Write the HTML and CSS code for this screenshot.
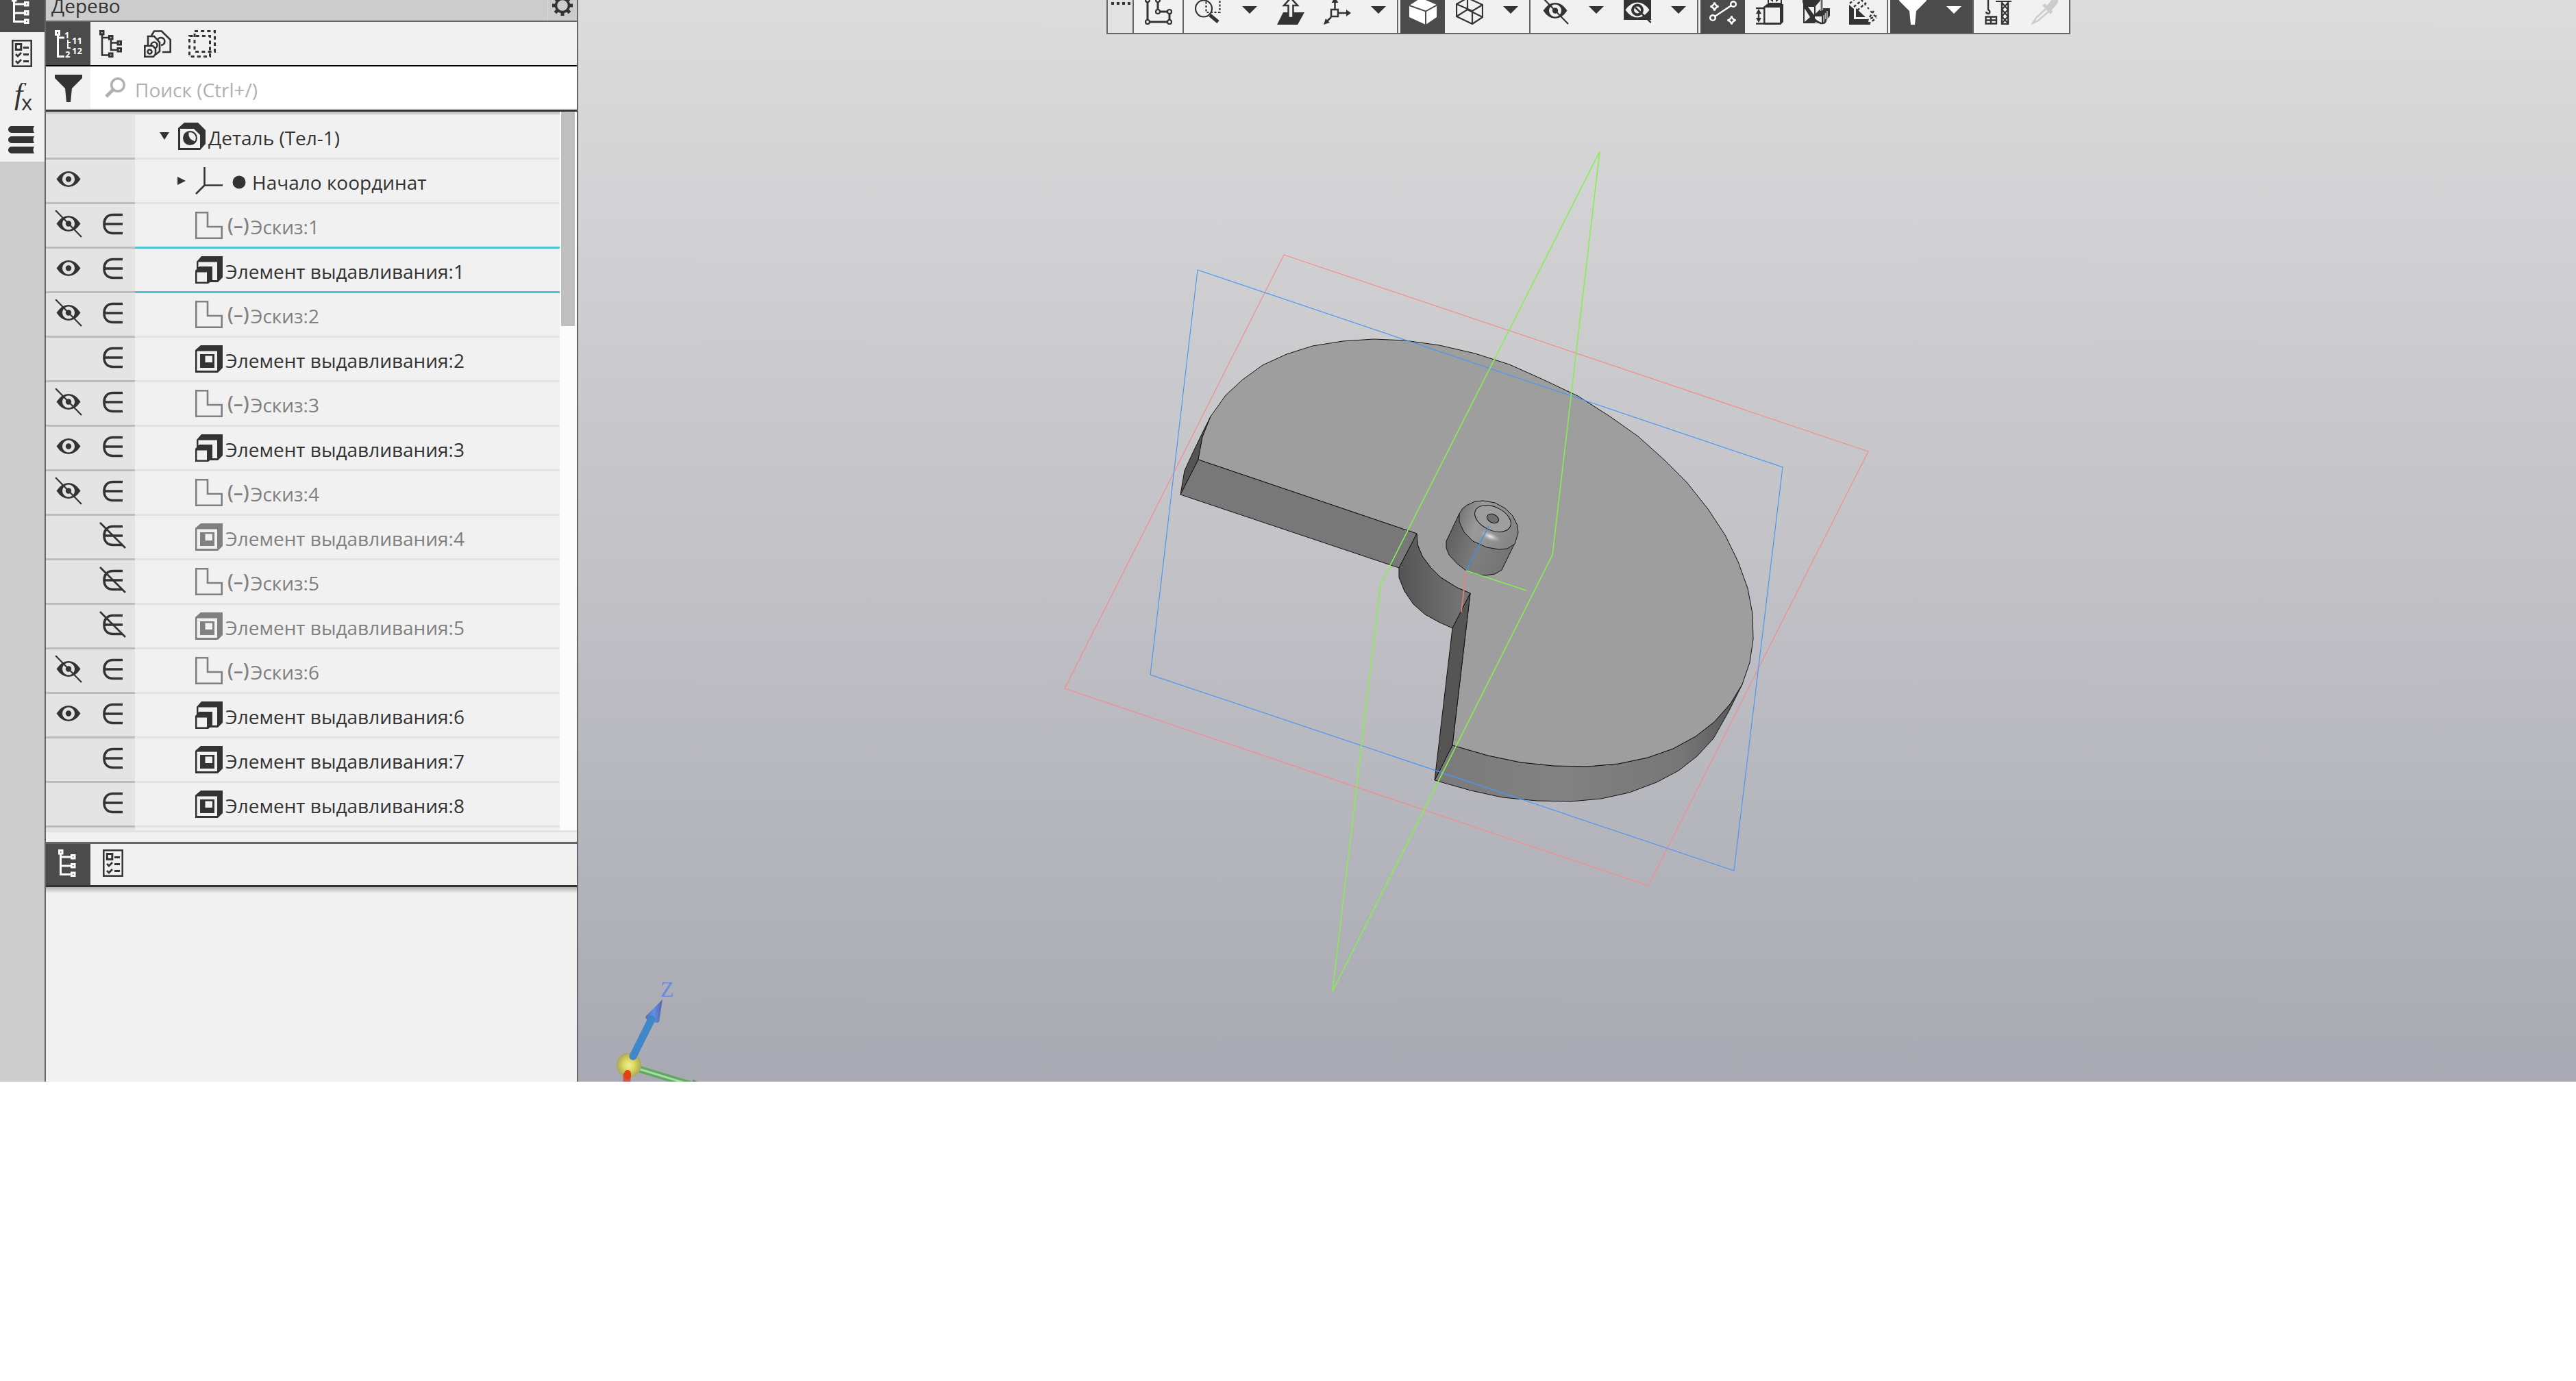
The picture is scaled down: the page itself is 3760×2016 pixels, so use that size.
FILE: index.html
```html
<!DOCTYPE html>
<html lang="ru">
<head>
<meta charset="utf-8">
<meta name="viewport" content="width=device-width, initial-scale=1">
<title>Деталь — Дерево</title>
<link rel="stylesheet" href="styles.css">
</head>
<body>
<svg class="sprite" aria-hidden="true">
  <symbol id="i-tree" viewBox="0 0 40 40"><g fill="none" stroke="currentColor" stroke-width="3"><rect x="6.500" y="1.500" width="4.500" height="4.500"/><rect x="24.500" y="8.500" width="4.500" height="4.500"/><rect x="24.500" y="21.500" width="4.500" height="4.500"/><rect x="24.500" y="34" width="4.500" height="4.500"/><path d="M8.500 7V36.500H23M8.500 11H23M8.500 24H23"/></g></symbol>
  <symbol id="i-list" viewBox="0 0 40 40"><g fill="none" stroke="currentColor" stroke-width="2.500"><rect x="6.300" y="1.300" width="27.400" height="37.400"/><rect x="11.300" y="6.500" width="7.500" height="8" stroke-width="3"/><path d="M22 11.500H30M22 21.500H30M22 31.500H30M11 21l3 3 5-5M11 31l3 3 5-5" stroke-width="2.800"/></g></symbol>
  <symbol id="i-books" viewBox="0 0 40 40"><path fill="currentColor" d="M5 0H38q-3 5 0 10H5a5 5 0 0 1 0-10zM5 15H38q-3 5 0 10H5a5 5 0 0 1 0-10zM5 30H38q-3 5 0 10H5a5 5 0 0 1 0-10z"/></symbol>
  <symbol id="i-numtree" viewBox="0 0 40 40"><g fill="none" stroke="currentColor" stroke-width="3"><rect x="1.500" y="1.500" width="5" height="5"/><path d="M4.500 8V38.500H14M4.500 11H14"/><path d="M19 14V27M19 18h4M19 26h4" stroke-width="2"/></g><g class="glyph"><text x="14" y="12">1</text><text x="25" y="20">11</text><text x="25" y="35">12</text><text x="15" y="40">2</text></g></symbol>
  <symbol id="i-branch" viewBox="0 0 40 40"><g fill="none" stroke="currentColor" stroke-width="3"><rect x="1.500" y="1.500" width="4.500" height="4.500"/><rect x="14.500" y="8.500" width="4.500" height="4.500"/><rect x="27" y="16.500" width="4.500" height="4.500"/><rect x="27" y="26.500" width="4.500" height="4.500"/><rect x="14.500" y="34" width="4.500" height="4.500"/><path d="M4 7V36.500H14M4 11H13M17 14V29H26M17 18.500H26" stroke-width="2.500"/></g></symbol>
  <symbol id="i-parts" viewBox="0 0 40 40"><g fill="#f1f1f1" stroke="currentColor" stroke-width="2.600"><path d="M11 8l4-6.500h11L38.700 14v18H27"/><path d="M20 14a5.500 5.500 0 1 1 5 8" fill="none"/><path d="M6 22V9h9l8 9v13l-5 4H8z"/><circle cx="15" cy="22" r="4.500"/><path d="M1.300 23H13l4 4v8l-3 3.700H1.300z"/><circle cx="8.500" cy="31.500" r="3"/></g></symbol>
  <symbol id="i-ghost" viewBox="0 0 40 40"><g fill="none" stroke="currentColor" stroke-width="3" stroke-dasharray="5 4.200"><rect x="1.500" y="8.500" width="30" height="30"/><rect x="9" y="1.500" width="29.500" height="30"/></g></symbol>
  <symbol id="i-fx" viewBox="0 0 40 40"><text class="fx-f" x="9" y="31">f</text><text class="fx-x" x="19" y="40">x</text></symbol>
  <symbol id="i-funnel" viewBox="0 0 40 40"><path fill="currentColor" d="M0 0H40V5L25 20 23 40H17L15 20 0 5z"/></symbol>
  <symbol id="i-search" viewBox="0 0 30 30"><g fill="none" stroke="currentColor"><circle cx="19" cy="11" r="9.300" stroke-width="3.500"/><path d="M12 18L2 28" stroke-width="5"/></g></symbol>
  <symbol id="i-gear" viewBox="0 0 30 30"><circle cx="15" cy="15" r="9.500" fill="none" stroke="currentColor" stroke-width="3.500"/><g stroke="currentColor" stroke-width="5"><path d="M15 0V5M15 25V30M0 15H5M25 15H30M4.400 4.400l3.500 3.500M22.100 22.100l3.500 3.500M4.400 25.600l3.500-3.500M22.100 7.900l3.500-3.500"/></g></symbol>
  <symbol id="i-eye" viewBox="0 0 40 40"><path fill="currentColor" fill-rule="evenodd" d="M2.500 19.500Q10 8 20 8T37.500 19.500Q30 31 20 31T2.500 19.500zM20 10.500a9 9 0 1 0 .01 0z"/><circle cx="20" cy="19.500" r="4.200" fill="currentColor"/></symbol>
  <symbol id="i-eyeoff" viewBox="0 0 40 40"><use href="#i-eye"/><path d="M1 0L39 39" stroke="currentColor" stroke-width="2.200"/></symbol>
  <symbol id="i-in" viewBox="0 0 40 40"><path d="M34 6.500H20C10.500 6.500 7 13 7 20S10.500 33.500 20 33.500H34M7 20H34" fill="none" stroke="currentColor" stroke-width="3.600"/></symbol>
  <symbol id="i-out" viewBox="0 0 40 40"><use href="#i-in"/><path d="M1 1L38 38" stroke="currentColor" stroke-width="2.600"/></symbol>
  <symbol id="i-part" viewBox="0 0 40 40"><path fill="currentColor" d="M0 8L9 0H29L40 11V31L32 40H0z"/><path fill="#f1f1f1" d="M3 9H23L32 18V37H3z"/><circle cx="17.500" cy="22.500" r="10.500" fill="currentColor"/><path fill="#f1f1f1" d="M15.500 14.500Q14 24 24.500 27.500Q28 20 22 15.500Q19 13.500 15.500 14.500z"/></symbol>
  <symbol id="i-origin" viewBox="0 0 40 40"><path d="M13.500 0V26.500H40M13.500 26.500L1 39" fill="none" stroke="currentColor" stroke-width="2.600"/></symbol>
  <symbol id="i-sketch" viewBox="0 0 40 40"><path d="M1.300 1.300H18V22H38.700V38.700H1.300z" fill="none" stroke="currentColor" stroke-width="2.600"/></symbol>
  <symbol id="i-boss" viewBox="0 0 40 40"><path fill="currentColor" d="M2 8L9 0H40V31L33 38H18L2 20z"/><path fill="#f1f1f1" d="M4.500 8.500H32V35H20V16H4.500z"/><path fill="currentColor" d="M0 21L6 15H25V35L19 40H0z"/><path fill="#f1f1f1" d="M2.500 23.500H17V37.500H2.500z"/></symbol>
  <symbol id="i-cut" viewBox="0 0 40 40"><path fill="currentColor" d="M0 7L8 0H40V33L33 40H0z"/><path fill="#f1f1f1" d="M2.500 8.500H32V37H2.500z"/><path fill="currentColor" d="M7 13H28V33H7z"/><path fill="#f1f1f1" d="M14.500 15.500H25V25H14.500z"/></symbol>
  <symbol id="i-profile" viewBox="0 0 40 40"><path d="M4 4V36H36V21H19V4" fill="none" stroke="currentColor" stroke-width="3"/><g fill="#f1f1f1" stroke="currentColor" stroke-width="2.200"><circle cx="4" cy="36" r="3"/><circle cx="36" cy="36" r="3"/><circle cx="36" cy="21" r="3"/><circle cx="19" cy="21" r="3"/><circle cx="19" cy="4" r="3"/><circle cx="4" cy="4" r="3"/></g></symbol>
  <symbol id="i-zoom" viewBox="0 0 40 40"><g fill="none" stroke="currentColor"><circle cx="13" cy="16.500" r="12" stroke-width="2.200"/><path d="M22 26L34 36" stroke-width="5"/><rect x="16.500" y="3" width="20" height="19" stroke-width="2.200" stroke-dasharray="3 2.500"/></g></symbol>
  <symbol id="i-normal" viewBox="0 0 40 40"><path fill="currentColor" d="M0 40L9 22H40L30 40z"/><path fill="#f1f1f1" stroke="currentColor" stroke-width="2.500" d="M16.500 30V12H10L20 1 30 12H23.500V30z"/></symbol>
  <symbol id="i-axes" viewBox="0 0 40 40"><g fill="none" stroke="currentColor" stroke-width="2.500"><rect x="11" y="18" width="10" height="10"/><path d="M22 23H35M16.500 17V4M11 29L3 37"/></g><path fill="currentColor" d="M33 18L40 23 33 28zM11.500 8L16.500 0 21.500 8zM0 40L3 31 9 37z"/></symbol>
  <symbol id="i-cube" viewBox="0 0 40 40"><path fill="currentColor" d="M0 12L17 1 40 11V29L24 40 0 29z"/><path d="M0 12L24 20.500 40 11.500M24 20.500V40" fill="none" stroke="#4b4b4b" stroke-width="2"/></symbol>
  <symbol id="i-wire" viewBox="0 0 40 40"><path d="M1 10L17 1 39 11V29L24 39 1 28zM1 10L24 20 39 11M24 20V39M17 1V18L1 28M17 18L39 29" fill="none" stroke="currentColor" stroke-width="2.200"/></symbol>
  <symbol id="i-eyebox" viewBox="0 0 40 40"><path fill="currentColor" d="M0 0H40V33H0z"/><path fill="#f1f1f1" d="M2.500 18.500Q10 7.500 20 7.500T37.500 18.500Q30 29.500 20 29.500T2.500 18.500z"/><circle cx="20" cy="18.500" r="7" fill="none" stroke="currentColor" stroke-width="4"/><path d="M17 15L40 37" stroke="currentColor" stroke-width="2.600"/></symbol>
  <symbol id="i-points" viewBox="0 0 40 40"><g fill="none" stroke="currentColor" stroke-width="2.500"><circle cx="5" cy="30" r="3.800"/><circle cx="35" cy="10" r="3.800"/><path d="M8 28L32 12"/><path d="M7.500 7.500Q8.500 12.500 13.500 13.500Q8.500 14.500 7.500 19.500Q6.500 14.500 1.500 13.500Q6.500 12.500 7.500 7.500zM32.500 27.500Q33.500 32.500 38.500 33.500Q33.500 34.500 32.500 39.500Q31.500 34.500 26.500 33.500Q31.500 32.500 32.500 27.500z"/></g></symbol>
  <symbol id="i-dims" viewBox="0 0 40 40"><path fill="currentColor" d="M11 14L16 10H40V36L36 40H11z"/><path fill="#f1f1f1" d="M13.500 15H35V37H13.500z"/><rect x="18" y="-3" width="19" height="12" fill="#f1f1f1" stroke="currentColor" stroke-width="2"/><path d="M0 16H11M0 38.500H11M4 20V34" stroke="currentColor" stroke-width="2.400"/><path fill="currentColor" d="M0 24L4 17 8 24zM0 30L4 37 8 30zM21 4l4-3v6zM33 4l-4-3v6z"/></symbol>
  <symbol id="i-section" viewBox="0 0 40 40"><path fill="currentColor" d="M1 4L12 0H30V16L40 16V27L31 38H1z"/><path fill="#f1f1f1" d="M4 14H8L17 26V14H4zM3 16L11 29 3 36zM18 28H28V37H18zM26 5L19 13V24L26 17z"/><path d="M29 3V19M26.500 4V20M31 26V37M33.500 23V35M36 20V32" stroke="#b8b8b8" stroke-width="1.600"/><path fill="currentColor" d="M9 37L15 25 21 36z"/><path d="M0 0Q2 16 12 26Q20 36 27 38Q34 39 34 32" fill="none" stroke="currentColor" stroke-width="2.500"/></symbol>
  <symbol id="i-hatch" viewBox="0 0 40 40"><path fill="currentColor" d="M0 11L7 17V32H26L31 40H0z"/><path fill="currentColor" d="M10 16L24 29H10z"/><path d="M1 9L10 1M7 14L20 3M12 19L25 8M30 29L36 20M25 34L40 27M28 39L40 30" fill="none" stroke="currentColor" stroke-width="2.500" stroke-dasharray="4 3"/><path d="M18 4L38 28" fill="none" stroke="currentColor" stroke-width="2" stroke-dasharray="3 4"/></symbol>
  <symbol id="i-crane" viewBox="0 0 40 40"><g fill="none" stroke="currentColor" stroke-width="2.400"><path d="M5 0V18Q9 21 6 24Q2 24 2 21M1.500 28.500H17V38.500H1.500zM9 28V39M1 33.500H17M25 5V40M34 5V40M25 39H34"/><path d="M25 8L34 18L25 28L34 38M34 8L25 18L34 28L25 38M16 6H39" stroke-width="2"/></g></symbol>
  <symbol id="i-dropper" viewBox="0 0 40 40"><g><path d="M21 17L7 30 2 38 10 34 25 21" fill="none" stroke="currentColor" stroke-width="2.500"/><path fill="currentColor" d="M16 12L20 9 23 12 30 3Q36 0 39 4Q40 10 30 18L31 21 28 25z"/></g></symbol>
  <symbol id="i-drop" viewBox="0 0 22 12"><path fill="currentColor" d="M0 0H22L11 11z"/></symbol>
  <symbol id="i-open" viewBox="0 0 20 20"><path fill="currentColor" d="M3 4H17L10 15z"/></symbol>
  <symbol id="i-closed" viewBox="0 0 20 20"><path fill="currentColor" d="M4 4L16 10 4 16z"/></symbol>
  <symbol id="i-dot" viewBox="0 0 20 20"><circle cx="10" cy="10" r="9.500" fill="currentColor"/></symbol>
</svg>

<main class="app">
  <nav class="strip" aria-label="Панели">
    <button class="tool active" aria-label="Дерево"><svg class="icon"><use href="#i-tree"/></svg></button>
    <button class="tool" aria-label="Параметры"><svg class="icon"><use href="#i-list"/></svg></button>
    <button class="tool" aria-label="Переменные"><svg class="icon"><use href="#i-fx"/></svg></button>
    <button class="tool" aria-label="Библиотеки"><svg class="icon"><use href="#i-books"/></svg></button>
  </nav>

  <aside class="panel">
    <header class="panel-head">
      <h1>Дерево</h1>
      <button class="gear" aria-label="Настройки"><svg><use href="#i-gear"/></svg></button>
    </header>
    <div class="panel-tools">
      <button class="tool active" aria-label="Структура с нумерацией"><svg class="icon"><use href="#i-numtree"/></svg></button>
      <button class="tool" aria-label="Структура"><svg class="icon"><use href="#i-branch"/></svg></button>
      <button class="tool" aria-label="Тела"><svg class="icon"><use href="#i-parts"/></svg></button>
      <button class="tool" aria-label="Зоны"><svg class="icon"><use href="#i-ghost"/></svg></button>
    </div>
    <div class="search">
      <button class="tool" aria-label="Фильтр"><svg class="icon"><use href="#i-funnel"/></svg></button>
      <label class="search-field">
        <svg class="search-icon" aria-hidden="true"><use href="#i-search"/></svg>
        <input type="text" placeholder="Поиск (Ctrl+/)" aria-label="Поиск">
      </label>
    </div>

    <div class="tree-area">
      <ul class="tree">
        <li class="row root"><div class="flags"></div><div class="node"><svg class="twist"><use href="#i-open"/></svg><svg class="icon"><use href="#i-part"/></svg><span>Деталь (Тел-1)</span></div></li>
        <li class="row"><div class="flags"><button aria-label="Скрыть"><svg class="icon"><use href="#i-eye"/></svg></button></div><div class="node"><svg class="twist"><use href="#i-closed"/></svg><svg class="icon"><use href="#i-origin"/></svg><svg class="dot"><use href="#i-dot"/></svg><span>Начало координат</span></div></li>
        <li class="row dim mark"><div class="flags"><button aria-label="Показать"><svg class="icon"><use href="#i-eyeoff"/></svg></button><button aria-label="Исключить"><svg class="icon"><use href="#i-in"/></svg></button></div><div class="node"><svg class="icon"><use href="#i-sketch"/></svg><b>(–)</b><span>Эскиз:1</span></div></li>
        <li class="row mark"><div class="flags"><button aria-label="Скрыть"><svg class="icon"><use href="#i-eye"/></svg></button><button aria-label="Исключить"><svg class="icon"><use href="#i-in"/></svg></button></div><div class="node"><svg class="icon"><use href="#i-boss"/></svg><span>Элемент выдавливания:1</span></div></li>
        <li class="row dim"><div class="flags"><button aria-label="Показать"><svg class="icon"><use href="#i-eyeoff"/></svg></button><button aria-label="Исключить"><svg class="icon"><use href="#i-in"/></svg></button></div><div class="node"><svg class="icon"><use href="#i-sketch"/></svg><b>(–)</b><span>Эскиз:2</span></div></li>
        <li class="row"><div class="flags"><button class="second" aria-label="Исключить"><svg class="icon"><use href="#i-in"/></svg></button></div><div class="node"><svg class="icon"><use href="#i-cut"/></svg><span>Элемент выдавливания:2</span></div></li>
        <li class="row dim"><div class="flags"><button aria-label="Показать"><svg class="icon"><use href="#i-eyeoff"/></svg></button><button aria-label="Исключить"><svg class="icon"><use href="#i-in"/></svg></button></div><div class="node"><svg class="icon"><use href="#i-sketch"/></svg><b>(–)</b><span>Эскиз:3</span></div></li>
        <li class="row"><div class="flags"><button aria-label="Скрыть"><svg class="icon"><use href="#i-eye"/></svg></button><button aria-label="Исключить"><svg class="icon"><use href="#i-in"/></svg></button></div><div class="node"><svg class="icon"><use href="#i-boss"/></svg><span>Элемент выдавливания:3</span></div></li>
        <li class="row dim"><div class="flags"><button aria-label="Показать"><svg class="icon"><use href="#i-eyeoff"/></svg></button><button aria-label="Исключить"><svg class="icon"><use href="#i-in"/></svg></button></div><div class="node"><svg class="icon"><use href="#i-sketch"/></svg><b>(–)</b><span>Эскиз:4</span></div></li>
        <li class="row dim"><div class="flags"><button class="second" aria-label="Включить"><svg class="icon"><use href="#i-out"/></svg></button></div><div class="node"><svg class="icon"><use href="#i-cut"/></svg><span>Элемент выдавливания:4</span></div></li>
        <li class="row dim"><div class="flags"><button class="second" aria-label="Включить"><svg class="icon"><use href="#i-out"/></svg></button></div><div class="node"><svg class="icon"><use href="#i-sketch"/></svg><b>(–)</b><span>Эскиз:5</span></div></li>
        <li class="row dim"><div class="flags"><button class="second" aria-label="Включить"><svg class="icon"><use href="#i-out"/></svg></button></div><div class="node"><svg class="icon"><use href="#i-cut"/></svg><span>Элемент выдавливания:5</span></div></li>
        <li class="row dim"><div class="flags"><button aria-label="Показать"><svg class="icon"><use href="#i-eyeoff"/></svg></button><button aria-label="Исключить"><svg class="icon"><use href="#i-in"/></svg></button></div><div class="node"><svg class="icon"><use href="#i-sketch"/></svg><b>(–)</b><span>Эскиз:6</span></div></li>
        <li class="row"><div class="flags"><button aria-label="Скрыть"><svg class="icon"><use href="#i-eye"/></svg></button><button aria-label="Исключить"><svg class="icon"><use href="#i-in"/></svg></button></div><div class="node"><svg class="icon"><use href="#i-boss"/></svg><span>Элемент выдавливания:6</span></div></li>
        <li class="row"><div class="flags"><button class="second" aria-label="Исключить"><svg class="icon"><use href="#i-in"/></svg></button></div><div class="node"><svg class="icon"><use href="#i-cut"/></svg><span>Элемент выдавливания:7</span></div></li>
        <li class="row"><div class="flags"><button class="second" aria-label="Исключить"><svg class="icon"><use href="#i-in"/></svg></button></div><div class="node"><svg class="icon"><use href="#i-cut"/></svg><span>Элемент выдавливания:8</span></div></li>
        <li class="row rest"><div class="flags"></div><div class="node"></div></li>
      </ul>
      <div class="scroll"><div class="thumb"></div></div>
    </div>

    <div class="splitter"></div>
    <div class="tabs">
      <button class="tool active" aria-label="Дерево"><svg class="icon"><use href="#i-tree"/></svg></button>
      <button class="tool" aria-label="Параметры"><svg class="icon"><use href="#i-list"/></svg></button>
    </div>
    <div class="empty"></div>
  </aside>

  <section class="view">
    <svg class="scene" viewBox="844 0 2916 1579" preserveAspectRatio="xMinYMin slice" role="img" aria-label="Модель детали">
      <defs>
        <linearGradient id="g-arc" x1="0" x2="1"><stop offset="0" stop-color="#545454"/><stop offset="1" stop-color="#787878"/></linearGradient>
        <linearGradient id="g-rim" x1="0" x2="1"><stop offset="0" stop-color="#7a7a7a"/><stop offset=".4" stop-color="#828282"/><stop offset=".8" stop-color="#777"/><stop offset="1" stop-color="#555"/></linearGradient>
        <linearGradient id="g-cyl" x1="0" x2="1" y2=".3"><stop offset="0" stop-color="#585858"/><stop offset=".6" stop-color="#7e7e7e"/><stop offset="1" stop-color="#747474"/></linearGradient>
        <linearGradient id="g-dome" x1="0" x2="1" y2=".3"><stop offset="0" stop-color="#6e6e6e"/><stop offset=".4" stop-color="#9a9a9a"/><stop offset="1" stop-color="#868686"/></linearGradient>
        <radialGradient id="g-spot"><stop offset="0" stop-color="#f2f2f2"/><stop offset="1" stop-color="#a0a0a0" stop-opacity="0"/></radialGradient>
        <radialGradient id="g-ball"><stop offset="0" stop-color="#f0eca0"/><stop offset=".4" stop-color="#e0dc5e"/><stop offset="1" stop-color="#aaa65c"/></radialGradient>
        <linearGradient id="g-cone" x1="0" x2="1"><stop offset="0" stop-color="#5a6ea8"/><stop offset=".5" stop-color="#5f8fe8"/><stop offset="1" stop-color="#5a62a0"/></linearGradient>
      </defs>
      <g stroke="#111" stroke-width="1" stroke-linejoin="round">
        <path fill="#555" d="M1723 722L1729 687 1741 661 1753 636 1767 608 1755 638 1749 671z"/>
        <path fill="url(#g-rim)" d="M2120 1088L2172 1103 2220 1113 2268 1118 2317 1119 2362 1115 2405 1106 2442 1093 2475 1075 2502 1054 2526 1027 2543 999 2523 1039 2501 1078 2477 1104 2450 1125 2418 1142 2378 1157 2337 1166 2293 1170 2243 1169 2193 1164 2147 1154 2094 1139z"/>
        <path fill="#9e9e9e" d="M1749 671L1755 638 1767 608 1789 577 1814 554 1843 533 1878 517 1916 505 1960 498 2005 495 2051 497 2101 504 2153 516 2203 532 2250 553 2303 578 2350 608 2391 637 2430 672 2462 704 2493 743 2518 781 2537 820 2551 859 2558 896 2559 933 2554 967 2543 999 2526 1027 2502 1054 2475 1075 2442 1093 2405 1106 2362 1115 2317 1119 2268 1118 2220 1113 2172 1103 2120 1088 2146 866 2127 858 2103 843 2088 828 2076 812 2069 795 2068 779z"/>
        <path fill="#787878" d="M1749 671L2068 779 2042 829 1723 722z"/>
        <path fill="url(#g-arc)" d="M2068 779L2069 795 2076 812 2088 828 2103 843 2127 858 2146 866 2120 917 2100 908 2080 897 2063 882 2050 863 2042 843 2042 829z"/>
        <path fill="#555" d="M2146 866L2120 917 2094 1139 2120 1088z"/>
        <path fill="url(#g-cyl)" d="M2130 750L2111 790 2111 800 2115 810 2127 823 2140 833 2157 839 2168 840 2182 838 2192 832 2211 793z"/>
        <path fill="url(#g-dome)" d="M2130 750L2135 742 2142 737 2153 732 2165 731 2182 734 2197 742 2208 753 2215 767 2216 778 2211 794 2200 801 2188 802 2170 799 2150 790 2137 777 2130 762z"/>
        <ellipse cx="2175" cy="783" rx="18" ry="7" fill="url(#g-spot)" stroke="none" transform="rotate(22 2175 783)"/>
        <ellipse cx="2179" cy="757" rx="28" ry="17" fill="#9e9e9e" transform="rotate(25 2179 757)"/>
        <ellipse cx="2179" cy="757" rx="9" ry="6" fill="#707070" transform="rotate(25 2179 757)"/>
      </g>
      <g fill="none" stroke-width="1.200">
        <path stroke="#f58c8c" d="M1874 372L2727 659 2406 1293 1554 1005z"/>
        <path stroke="#4a98f2" d="M1748 394L2602 682 2531 1271 1679 985z"/>
        <path stroke="#86ee50" stroke-width="1.600" d="M2335 221L2266 810 1945 1447 2015 853z"/>
        <path stroke="#3c8ff0" stroke-width="1.500" d="M2140 833L2173 768"/>
        <path stroke="#86ee50" stroke-width="1.800" d="M2140 833L2228 862"/>
        <path stroke="#f08080" stroke-width="1.500" d="M2140 833L2133 894"/>
      </g>
      <g>
        <path d="M931 1560L1010 1584" stroke="#62a862" stroke-width="10"/>
        <path d="M931 1560L1010 1584" stroke="#a6dca6" stroke-width="3"/>
        <path fill="#5f8f68" d="M1012 1576L1018 1579H1010z"/>
        <circle cx="918" cy="1555" r="18" fill="url(#g-ball)"/>
        <path fill="url(#g-cone)" d="M967 1459L942 1484Q943 1490 951 1492T962 1492z"/>
        <path d="M924 1542L951 1488" stroke="#3f87c8" stroke-width="11" stroke-linecap="round"/>
        <path d="M915 1567V1590" stroke="#cc5656" stroke-width="11"/>
        <path d="M916 1567V1571" stroke="#e04410" stroke-width="10" stroke-linecap="round"/>
        <text class="axis" x="964" y="1455">Z</text>
      </g>
    </svg>

    <div class="toolbar" role="toolbar" aria-label="Вид">
      <div class="grip"><i></i><i></i><i></i><i></i></div>
      <div class="group"><button class="tool" aria-label="Эскиз"><svg class="icon"><use href="#i-profile"/></svg></button></div>
      <div class="group">
        <div class="split"><button class="tool" aria-label="Масштаб"><svg class="icon"><use href="#i-zoom"/></svg></button><button class="drop" aria-label="Ещё"><svg><use href="#i-drop"/></svg></button></div><div class="pair">
        <button class="tool" aria-label="Нормально к"><svg class="icon"><use href="#i-normal"/></svg></button>
        <div class="split"><button class="tool" aria-label="Ориентация"><svg class="icon"><use href="#i-axes"/></svg></button><button class="drop" aria-label="Ещё"><svg><use href="#i-drop"/></svg></button></div></div>
      </div>
      <div class="group">
        <div class="pair"><button class="tool active" aria-label="Полутоновое"><svg class="icon"><use href="#i-cube"/></svg></button>
        <div class="split"><button class="tool" aria-label="Каркас"><svg class="icon"><use href="#i-wire"/></svg></button><button class="drop" aria-label="Ещё"><svg><use href="#i-drop"/></svg></button></div></div>
      </div>
      <div class="group">
        <div class="split"><button class="tool" aria-label="Скрыть"><svg class="icon"><use href="#i-eyeoff"/></svg></button><button class="drop" aria-label="Ещё"><svg><use href="#i-drop"/></svg></button></div>
        <div class="split"><button class="tool" aria-label="Скрыть объекты"><svg class="icon"><use href="#i-eyebox"/></svg></button><button class="drop" aria-label="Ещё"><svg><use href="#i-drop"/></svg></button></div>
      </div>
      <div class="group end">
        <div class="pair"><button class="tool active" aria-label="Привязки"><svg class="icon"><use href="#i-points"/></svg></button>
        <button class="tool" aria-label="Размеры"><svg class="icon"><use href="#i-dims"/></svg></button>
        <button class="tool" aria-label="Сечение"><svg class="icon"><use href="#i-section"/></svg></button>
        <button class="tool" aria-label="Зона"><svg class="icon"><use href="#i-hatch"/></svg></button></div>
      </div>
      <div class="group">
        <div class="split active"><button class="tool" aria-label="Фильтр"><svg class="icon"><use href="#i-funnel"/></svg></button><button class="drop" aria-label="Ещё"><svg><use href="#i-drop"/></svg></button></div>
      </div>
      <div class="group end">
        <div class="pair"><button class="tool" aria-label="Сборка"><svg class="icon"><use href="#i-crane"/></svg></button>
        <button class="tool" disabled aria-label="Копировать свойства"><svg class="icon"><use href="#i-dropper"/></svg></button></div>
      </div>
    </div>
  </section>
</main>
</body>
</html>
```
FILE: styles.css
```css
:root {
  --ink: #333;
  --muted: #808080;
  --face: #f1f1f1;
  --chrome: #ccc;
  --edge: #666;
  --dark: #4b4b4b;
}

* { box-sizing: border-box; }

body {
  margin: 0;
  background: #fff;
  color: var(--ink);
  font: 28px/36px "Open Sans", "Noto Sans", sans-serif;
}

button {
  border: 0;
  padding: 0;
  background: none;
  color: inherit;
  font: inherit;
}

svg { display: block; flex: none; }
.sprite { position: absolute; width: 0; height: 0; }
.icon { width: 40px; height: 40px; }
.glyph { fill: currentColor; font: 700 13px "Open Sans", sans-serif; }
.fx-f { fill: currentColor; font: italic 44px "Liberation Serif", serif; }
.fx-x { fill: currentColor; font: 31px "Open Sans", sans-serif; }

.app {
  display: flex;
  overflow: hidden;
}

.tool {
  flex: none;
  display: flex;
  align-items: center;
  justify-content: center;
  width: 65px;
  height: 63px;
}
.active { background: var(--dark); color: #fff; }
.tool:disabled { color: #ccc; }

/* left strip */
.strip {
  flex: none;
  width: 65px;
  margin-top: -16px;
  background: var(--chrome);
}
.strip .tool { padding: 0 2px 1px 0; }
.strip .tool:not(.active) { background: var(--face); }

/* tree panel */
.panel {
  flex: none;
  display: flex;
  flex-direction: column;
  width: 779px;
  border: solid var(--edge);
  border-width: 0 2px;
  background: var(--face);
}
.panel-head {
  display: flex;
  justify-content: space-between;
  align-items: flex-start;
  height: 32px;
  padding-left: 8px;
  border-bottom: 2px solid var(--edge);
  background: var(--chrome);
}
.panel-head h1 {
  margin: -10px 0 0;
  font-size: 28px;
  font-weight: 400;
}
.gear {
  width: 43px;
  height: 30px;
  padding-left: 6px;
  border-left: 1px solid #d8d8d8;
}
.gear svg { width: 30px; height: 30px; margin-top: -14px; }
.panel-tools {
  display: flex;
  border-bottom: 2px solid #000;
}
.search {
  display: flex;
  border-bottom: 3px solid #303433;
}
.search-field {
  flex: 1;
  display: flex;
  align-items: center;
  gap: 13px;
  padding-left: 21px;
  border-bottom: 2px solid var(--face);
  background: #fff;
  color: #b0b0b0;
}
.search-icon { width: 30px; height: 30px; }
.search input {
  flex: 1;
  height: 44px;
  border: 0;
  padding: 6px 0 0 1px;
  background: none;
  outline: 0;
  color: var(--ink);
  font: inherit;
}
.search input::placeholder { color: #b0b0b0; opacity: 1; }

.tree-area { display: flex; }
.tree {
  flex: 1;
  margin: 0;
  padding: 0;
  list-style: none;
}
.tree::before {
  content: "";
  display: block;
  height: 5px;
  background: linear-gradient(#b4b4b4, #e8e8e8);
}
.row { display: flex; height: 65px; }
.flags {
  flex: none;
  display: flex;
  width: 130px;
  border-bottom: 3px solid #bcbcbc;
  background: #e4e4e4;
}
.flags button {
  display: flex;
  align-items: center;
  justify-content: center;
  width: 65px;
  height: 58px;
}
.second { margin-left: 65px; }
.node {
  flex: 1;
  display: flex;
  align-items: center;
  padding-left: 88px;
  border-bottom: 3px solid #e3e3e3;
}
.node:has(.twist) { padding-left: 58px; }
.root .node { padding-left: 33px; }
.twist { width: 20px; height: 20px; margin-right: 10px; }
.dot { width: 20px; height: 20px; margin: 4px 8px 0 14px; }
.node > span { padding: 4px 0 0 4px; }
.node .dot + span { padding-left: 1px; }
.node b { padding: 0 2px 2px 7px; font-weight: 600; }
.node b + span { padding-left: 0; }
.dim .node { color: var(--muted); }
.mark .node { border-color: #4ec3d3; }
.rest { height: 4px; }
.rest div { border: 0; }

.scroll {
  width: 25px;
  padding: 0 3px 0 2px;
  background: #fcfcfc;
}
.thumb { height: 313px; background: #bfbfbf; }

.splitter {
  height: 17px;
  border-top: 3px solid #e3e3e3;
}
.tabs {
  display: flex;
  align-items: center;
  border-top: 3px solid var(--edge);
  border-bottom: 3px solid #333;
}
.tabs .tool { height: 60px; padding-bottom: 4px; }
.empty {
  flex: 1;
  min-height: 284px;
  background: linear-gradient(#b0b0b0, var(--face) 9px);
}

/* model view */
.view {
  flex: 1;
  position: relative;
  overflow: hidden;
  background: linear-gradient(#dcdcdc, #a9a9b3);
}
.scene {
  position: absolute;
  inset: 0;
  width: 100%;
  height: 100%;
}
.axis { fill: #6a8ade; font: 32px "Liberation Serif", serif; }

.toolbar {
  position: absolute;
  top: -16px;
  left: 771px;
  display: flex;
  height: 66px;
  border: 2px solid var(--edge);
  background: var(--face);
}
.grip {
  display: flex;
  gap: 4px;
  width: 36px;
  padding: 17px 0 0 5px;
  background: #e3e3e3;
}
.grip i { width: 4px; height: 4px; background: var(--ink); }
.group {
  display: flex;
  padding-left: 3px;
  border-left: 2px solid var(--edge);
}
.group:nth-child(2), .group.end { padding-right: 3px; }
.pair { display: flex; gap: 3px; }
.split { display: flex; }
.toolbar .tool { padding-bottom: 3px; }
.drop {
  display: flex;
  justify-content: center;
  width: 55px;
  padding-top: 23px;
}
.drop svg { width: 22px; height: 12px; }
.split.active { height: 62px; }
```
